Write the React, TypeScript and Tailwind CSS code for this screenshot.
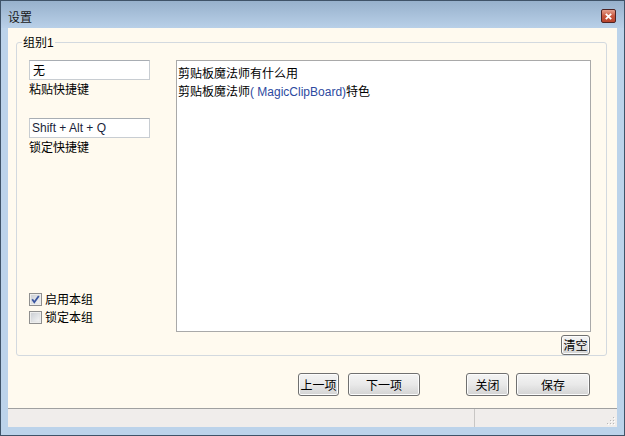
import React from "react";

const CJK = '"Noto Sans CJK SC", "Liberation Sans", sans-serif';
const LAT = '"Liberation Sans", "Noto Sans CJK SC", sans-serif';

function Btn({ label, w, h = 23, className = "" }: { label: string; w: number; h?: number; className?: string }) {
  return (
    <div
      className={`flex items-center justify-center rounded-[3px] border border-[#707070] bg-gradient-to-b from-[#f4f4f4] via-[#e9e9e9] to-[#d3d3d3] text-[12px] leading-[14px] text-black shadow-[inset_0_0_0_1px_#fcfcfc] ${className}`}
      style={{ width: w, height: h }}
    >
      {label}
    </div>
  );
}

function Check({ checked }: { checked: boolean }) {
  return (
    <svg width="13" height="13" viewBox="0 0 13 13" className="shrink-0">
      <defs>
        <linearGradient id={checked ? "cg1" : "cg2"} x1="0" y1="0" x2="1" y2="1">
          <stop offset="0" stopColor="#cbcfd5" />
          <stop offset="1" stopColor="#f6f6f6" />
        </linearGradient>
      </defs>
      <rect x="0.5" y="0.5" width="12" height="12" fill="#f4f4f4" stroke="#8f8f8f" />
      <rect x="2" y="2" width="9" height="9" fill={`url(#${checked ? "cg1" : "cg2"})`} stroke="#d6d6d6" strokeWidth="0.5" />
      {checked && <path d="M3.2 6.2 L5.3 9.2 L9.8 3" fill="none" stroke="#3a55a0" strokeWidth="1.8" />}
    </svg>
  );
}

export default function App() {
  return (
    <div
      className="flex h-[436px] w-[625px] flex-col border border-[#3f5368] bg-[#bcd3ea]"
      style={{ fontFamily: CJK }}
    >
      {/* title bar */}
      <div className="flex h-[27px] shrink-0 items-start bg-gradient-to-b from-[#97b1cc] to-[#b9d0e8] pl-[7px] pr-[8px]">
        <span className="mt-[8px] text-[12px] leading-[15px] text-[#1a1a1a]">设置</span>
        <div className="ml-auto mt-[8px] flex h-[14px] w-[15px] items-center justify-center rounded-[2px] border border-[#4e2323] bg-gradient-to-b from-[#e4a08e] via-[#c8583f] to-[#b8442c]">
          <svg width="7" height="7" viewBox="0 0 7 7">
            <path d="M0.8 0.8 L6.2 6.2 M6.2 0.8 L0.8 6.2" stroke="#ffffff" strokeWidth="1.8" />
          </svg>
        </div>
      </div>

      {/* client */}
      <div className="mx-[7px] flex h-[399px] flex-col bg-[#fffaef]">
        {/* group box */}
        <div className="relative ml-[8px] mr-[10px] mt-[14px] h-[314px] rounded-[3px] border border-[#d3d9df] pl-[12px] pr-[15px] pt-[17px]">
          <span className="absolute left-[5px] top-[-9px] bg-[#fffaef] px-[1px] text-[12px] leading-[16px] text-black">
            组别<span style={{ fontFamily: LAT }}>1</span>
          </span>
          <div className="flex">
            <div className="flex h-[272px] w-[121px] flex-col pb-[6px]">
              <div className="flex h-[20px] items-center border border-[#c8cdd2] border-t-[#a8adb3] bg-white pl-[3px] text-[12px] text-black">
                无
              </div>
              <div className="h-[18px] text-[12px] leading-[18px] text-black">粘贴快捷键</div>
              <div
                className="mt-[20px] flex h-[20px] items-center border border-[#c8cdd2] border-t-[#a8adb3] bg-white pl-[2px] text-[12px] text-[#1b1f3a]"
                style={{ fontFamily: LAT }}
              >
                Shift + Alt + Q
              </div>
              <div className="h-[18px] text-[12px] leading-[18px] text-black">锁定快捷键</div>
              <div className="mt-auto flex h-[18px] items-center gap-[3px] text-[12px] text-black">
                <Check checked={true} />
                <span>启用本组</span>
              </div>
              <div className="flex h-[18px] items-center gap-[3px] text-[12px] text-black">
                <Check checked={false} />
                <span>锁定本组</span>
              </div>
            </div>
            <div className="ml-[26px] h-[272px] w-[415px] border border-[#a9a9a9] bg-white pl-[1px] pt-[3px] text-[12px] leading-[18px] text-black">
              <div>剪贴板魔法师有什么用</div>
              <div>
                剪贴板魔法师
                <span className="text-[#2d4aa0]" style={{ fontFamily: LAT }}>
                  ( MagicClipBoard)
                </span>
                特色
              </div>
            </div>
          </div>
          <div className="mt-[3px] flex justify-end pr-[1px]">
            <Btn label="清空" w={29} h={20} />
          </div>
        </div>

        {/* buttons */}
        <div className="mt-[17px] flex justify-end pr-[27px]">
          <Btn label="上一项" w={41} />
          <Btn label="下一项" w={72} className="ml-[9px]" />
          <Btn label="关闭" w={43} className="ml-[46px]" />
          <Btn label="保存" w={74} className="ml-[7px]" />
        </div>

        {/* status bar */}
        <div className="mt-auto flex h-[19px] border-t border-[#a0a0a0] bg-[#f0edeb]">
          <div className="w-[467px] border-r border-[#c8c6c4]" />
          <div className="flex flex-1 items-end justify-end pb-[2px] pr-[2px]">
            <svg width="10" height="10" viewBox="0 0 10 10">
              {[
                [8, 2],
                [5, 5],
                [8, 5],
                [2, 8],
                [5, 8],
                [8, 8],
              ].map(([x, y], i) => (
                <g key={i}>
                  <rect x={x} y={y} width="1" height="1" fill="#b8b8b8" />
                  <rect x={x + 1} y={y + 1} width="1" height="1" fill="#ffffff" />
                </g>
              ))}
            </svg>
          </div>
        </div>
      </div>
    </div>
  );
}
